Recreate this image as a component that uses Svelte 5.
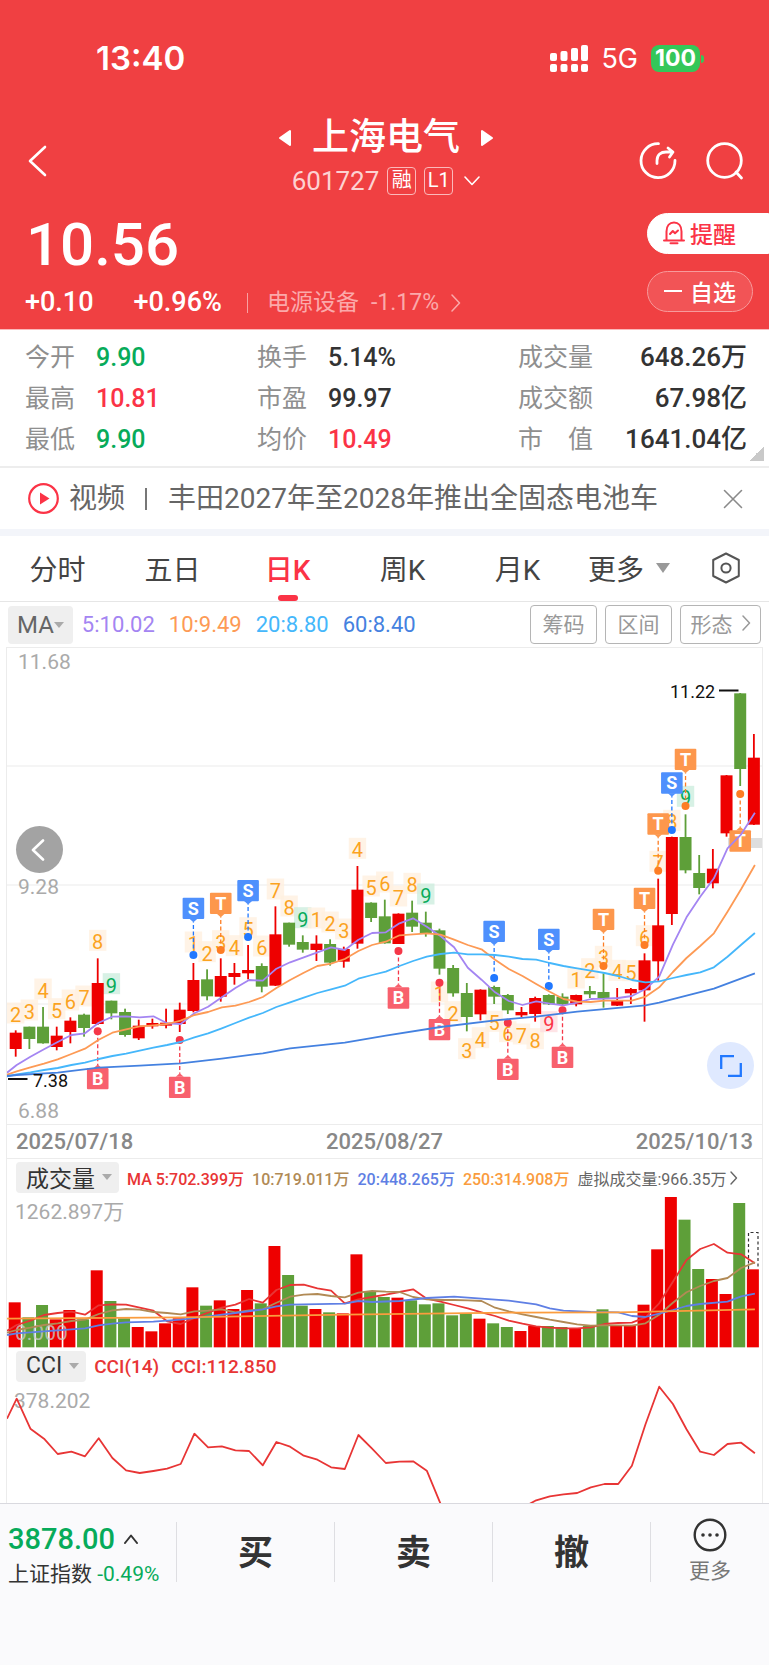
<script>
	const quotes = [
		{ label: '今开', value: '9.90', tone: 'down' },
		{ label: '换手', value: '5.14%' },
		{ label: '成交量', value: '648.26万' },
		{ label: '最高', value: '10.81', tone: 'up' },
		{ label: '市盈', value: '99.97' },
		{ label: '成交额', value: '67.98亿' },
		{ label: '最低', value: '9.90', tone: 'down' },
		{ label: '均价', value: '10.49', tone: 'up' },
		{ label: '市　值', value: '1641.04亿' }
	];

	const periods = ['分时', '五日', '日K', '周K', '月K'];
	let period = $state('日K');

	const averages = [
		{ text: '5:10.02', color: '#a485f2' },
		{ text: '10:9.49', color: '#fd9a55' },
		{ text: '20:8.80', color: '#45b7fb' },
		{ text: '60:8.40', color: '#4481e0' }
	];

	const volumeLegend = [
		{ text: 'MA 5:702.399万', color: '#e83535' },
		{ text: '10:719.011万', color: '#b18a55' },
		{ text: '20:448.265万', color: '#5f7fe4' },
		{ text: '250:314.908万', color: '#fa9c3e' }
	];

	// all chart data is in thirds of a pixel, measured down from the chart origin
	const x = (i) => 15.7 + 13.67 * i;

	// r/g, high, body top, body bottom, low
	const candles = `r 1171 1178 1227 1250|g 1160 1160 1197 1227|g 1101 1160 1210 1211|r 1160 1187 1221 1231
|r 1132 1142 1176 1210|g 1121 1124 1164 1190|r 955 1029 1152 1155|g 1082 1082 1120 1138|g 1106 1116 1185 1190
|r 1139 1157 1195 1200|r 1136 1149 1159 1166|r 1106 1148 1157 1165|r 1088 1109 1152 1176|r 969 1020 1113 1117
|g 988 1018 1069 1081|r 955 1008 1070 1085|r 969 999 1011 1034|r 915 990 1000 1018|g 970 978 1040 1057
|r 799 883 1037 1038|g 848 848 914 920|g 886 906 929 938|r 886 911 930 963|g 898 912 968 977|r 920 927 965 983
|r 678 749 911 926|g 787 788 834 846|g 779 829 910 911|r 820 821 912 912|g 782 818 860 876|g 815 848 879 890
|g 866 871 986 1004|g 975 984 1060 1070|g 1029 1059 1131 1174|r 1048 1049 1123 1141|g 1037 1041 1070 1092
|g 1062 1065 1111 1122|r 1101 1116 1126 1131|r 1070 1074 1122 1145|g 1063 1065 1093 1095|g 1060 1070 1093 1095
|r 1064 1065 1093 1099|g 1038 1053 1063 1074|g 1000 1056 1074 1103|r 1044 1081 1097 1098|r 1044 1047 1060 1092
|r 940 961 1051 1145|r 716 856 964 1022|r 590 591 822 855|g 523 591 691 700|g 645 699 744 763|r 627 686 730 745
|r 405 406 580 590|g 159 160 387 438|r 282 353 554 555`
		.split('|')
		.map((row) => {
			const [kind, ...rest] = row.trim().split(' ');
			const [high, top, bottom, low] = rest.map((v) => v / 3);
			return { kind, high, top, bottom, low };
		});

	const volumes = [
		577, 622, 585, 628, 600, 628, 481, 573, 625, 651, 664, 640, 625, 532, 587, 571, 597, 540, 580,
		408, 495, 587, 597, 607, 610, 433, 545, 561, 563, 571, 583, 580, 616, 612, 626, 640, 651, 663,
		648, 648, 651, 656, 648, 598, 648, 645, 584, 418, 261, 329, 477, 507, 552, 279, 478
	];

	// index, number, box centre
	const counts = [
		[0, 2, 1119], [1, 3, 1110], [2, 4, 1047], [3, 5, 1106], [4, 6, 1080], [5, 7, 1068],
		[6, 8, 901], [7, 9, 1031], [13, 1, 906], [14, 2, 935], [15, 3, 902], [16, 4, 917], [17, 5, 863],
		[18, 6, 918], [19, 7, 747], [20, 8, 798], [21, 9, 833], [22, 1, 834], [23, 2, 846], [24, 3, 867],
		[25, 4, 625], [26, 5, 738], [27, 6, 726], [28, 7, 768], [29, 8, 730], [30, 9, 762], [31, 1, 1056],
		[32, 2, 1115], [33, 3, 1226], [34, 4, 1193], [35, 5, 1144], [36, 6, 1175], [37, 7, 1182],
		[38, 8, 1196], [39, 9, 1145], [41, 1, 1014], [42, 2, 986], [43, 3, 949], [44, 4, 991], [45, 5, 992],
		[46, 6, 887], [47, 7, 664], [48, 8, 541], [49, 9, 469]
	];

	// index, letter, box top, dot
	const signals = [
		[6, 'B', 1284, 1174], [12, 'B', 1310, 1200], [13, 'S', 773, 945], [15, 'T', 758, 930],
		[17, 'S', 720, 891], [28, 'B', 1042, 933], [31, 'B', 1137, 1028], [35, 'S', 842, 1014],
		[36, 'B', 1256, 1148], [39, 'S', 866, 1038], [40, 'B', 1220, 1111], [43, 'T', 806, 978],
		[46, 'T', 743, 915], [47, 'T', 520, 692], [48, 'S', 397, 570], [49, 'T', 326, 498],
		[53, 'T', 571, 462]
	];
	const signalColors = {
		B: ['#f8606d', '#f53748'],
		S: ['#4e90fd', '#2178ff'],
		T: ['#fd974c', '#fd7d24']
	};

	// first value is the left edge, then one per candle
	function dense(values) {
		return values
			.map((v, i) => `${i === 0 ? 7 : (x(i - 1) + 1).toFixed(1)},${(v / 3).toFixed(1)}`)
			.join(' ');
	}

	function sparse(pairs) {
		return pairs.map(([i, v]) => `${(x(i) + 1).toFixed(1)},${(v / 3).toFixed(1)}`).join(' ');
	}

	const priceLines = [
		{
			color: '#a485f2',
			points: dense([
				1298, 1275, 1250, 1228, 1206, 1185, 1180, 1148, 1130, 1129, 1132, 1129, 1150, 1152, 1120,
				1100, 1072, 1044, 1020, 1022, 986, 967, 952, 937, 922, 930, 899, 879, 877, 850, 835, 860, 888,
				922, 983, 1019, 1057, 1083, 1095, 1084, 1091, 1096, 1088, 1077, 1076, 1074, 1068, 1047, 1010,
				914, 832, 770, 715, 625, 583, 518
			])
		},
		{
			color: '#fd9a55',
			points: dense([
				1304, 1294, 1282, 1271, 1258, 1242, 1226, 1199, 1178, 1168, 1159, 1156, 1152, 1142, 1125,
				1116, 1102, 1097, 1086, 1071, 1044, 1020, 998, 978, 971, 957, 933, 915, 905, 886, 883, 880,
				884, 899, 915, 928, 959, 987, 1008, 1032, 1055, 1077, 1085, 1086, 1082, 1082, 1082, 1070,
				1042, 996, 954, 918, 880, 815, 747, 675
			])
		},
		{
			color: '#45b7fb',
			points: dense([
				1309, 1303, 1297, 1290, 1284, 1275, 1268, 1257, 1248, 1241, 1232, 1223, 1215, 1206, 1192,
				1180, 1165, 1149, 1133, 1119, 1101, 1087, 1073, 1059, 1048, 1037, 1016, 1005, 995, 978, 963,
				950, 942, 938, 943, 943, 945, 950, 957, 959, 969, 978, 985, 992, 999, 1008, 1020, 1027, 1024,
				1014, 1005, 997, 982, 950, 914, 879
			])
		},
		{
			color: '#4481e0',
			points: sparse([
				[-0.7, 1308], [0, 1305], [3, 1298], [6, 1283], [9, 1277], [12, 1270], [15, 1256], [18, 1240],
				[20, 1225], [24, 1208], [27, 1187], [31, 1161], [35, 1141], [38, 1130], [41, 1115],
				[46, 1096], [47, 1088], [49, 1067], [51, 1046], [54, 1000]
			])
		}
	];

	const volumeLines = [
		{
			color: '#e83535',
			points: dense([
				662, 645, 632, 615, 609, 605, 614, 586, 583, 584, 593, 602, 634, 642, 624, 608, 593, 584, 567,
				578, 540, 525, 524, 535, 542, 580, 568, 561, 554, 546, 538, 566, 575, 585, 595, 607, 618, 632,
				641, 649, 653, 655, 655, 652, 642, 639, 638, 622, 580, 515, 450, 417, 402, 428, 433, 460
			])
		},
		{
			color: '#b18a55',
			points: dense([
				668, 660, 653, 645, 640, 633, 629, 612, 601, 597, 599, 606, 609, 613, 604, 602, 598, 607, 601,
				598, 578, 560, 554, 552, 558, 562, 548, 543, 545, 546, 561, 568, 570, 570, 571, 573, 593, 604,
				613, 621, 629, 636, 643, 647, 646, 646, 647, 640, 614, 578, 547, 528, 513, 504, 474, 457
			])
		},
		{
			color: '#5f7fe4',
			points: sparse([
				[-0.7, 675], [0, 670], [3, 661], [5, 655], [6, 646], [7, 641], [8, 637], [10, 635], [12, 629],
				[14, 619], [16, 609], [18, 598], [19, 589], [20, 584], [24, 581], [25, 573], [26, 576],
				[28, 573], [30, 564], [32, 560], [34, 566], [36, 572], [38, 583], [39, 595], [40, 602],
				[42, 606], [44, 607], [45, 618], [46, 621], [47, 611], [48, 600], [49, 588], [50, 582],
				[52, 575], [53, 559], [54, 551]
			])
		},
		{
			color: '#fa9c3e',
			points: sparse([[-0.7, 626], [12, 622], [24, 614], [36, 608], [44, 607], [54, 598]])
		}
	];

	const cci = dense([
		923, 863, 953, 983, 1029, 1022, 1036, 982, 1041, 1078, 1086, 1080, 1073, 1059, 968, 1009, 1006,
		1018, 1020, 1063, 993, 1007, 1034, 1046, 1069, 1074, 972, 1013, 1056, 1052, 1051, 1079, 1178,
		1260, 1280, 1280, 1270, 1240, 1190, 1168, 1156, 1150, 1146, 1129, 1119, 1119, 1064, 940, 827,
		879, 955, 1022, 1032, 999, 995, 1027
	]);
</script>

<div class="page">
	<header>
		<div class="status">
			<span class="clock">13:40</span>
			<div class="status-right">
				<svg width="38" height="28" viewBox="0 0 38 28" fill="#fff">
					<rect x="0" y="9" width="7" height="8" rx="2" />
					<rect x="10.5" y="7" width="7" height="10" rx="2" />
					<rect x="21" y="4" width="7" height="13" rx="2" />
					<rect x="31" y="1" width="7" height="16" rx="2" />
					<rect x="0" y="20" width="7" height="8" rx="2" />
					<rect x="10.5" y="20" width="7" height="8" rx="2" />
					<rect x="21" y="20" width="7" height="8" rx="2" />
					<rect x="31" y="20" width="7" height="8" rx="2" />
				</svg>
				<span class="network">5G</span>
				<span class="battery">100</span>
			</div>
		</div>

		<nav class="title-bar">
			<button class="icon-btn" aria-label="返回">
				<svg width="20" height="32" viewBox="0 0 20 32">
					<path d="M17 2 2 16l15 14" stroke-width="2.6" />
				</svg>
			</button>
			<div class="stock">
				<div class="stock-name">
					<button class="icon-btn" aria-label="上一只">
						<svg width="14" height="18" viewBox="0 0 14 18">
							<path d="M12 2v14L2 9z" fill="#fff" stroke-width="2" />
						</svg>
					</button>
					<h1>上海电气</h1>
					<button class="icon-btn" aria-label="下一只">
						<svg width="14" height="18" viewBox="0 0 14 18">
							<path d="M2 2v14l10-7z" fill="#fff" stroke-width="2" />
						</svg>
					</button>
				</div>
				<div class="stock-code">
					<span>601727</span>
					<span class="tag">融</span>
					<span class="tag">L1</span>
					<svg width="16" height="10" viewBox="0 0 16 10">
						<path d="M1 1l7 7.500L15 1" stroke-width="1.6" />
					</svg>
				</div>
			</div>
			<div class="actions">
				<button class="icon-btn" aria-label="分享">
					<svg width="38" height="38" viewBox="0 0 38 38" stroke-width="2.8">
						<path d="M19.500 1.700A17 17 0 1 0 36 18.500" />
						<path d="M18 21.500v-3c0-6 4-8.500 9-8.500h6.500M29 6l5 4-3.500 5" />
					</svg>
				</button>
				<button class="icon-btn" aria-label="搜索">
					<svg width="38" height="38" viewBox="0 0 38 38" stroke-width="2.8">
						<circle cx="18.500" cy="18.500" r="16.800" />
						<path d="M30 30l5.500 6" />
					</svg>
				</button>
			</div>
		</nav>

		<div class="summary">
			<div>
				<div class="price">10.56</div>
				<div class="change">
					<span>+0.10</span>
					<span class="percent">+0.96%</span>
					<a class="sector" href="#sector">
						<span>电源设备</span>
						<span>-1.17%</span>
						<svg width="10" height="18" viewBox="0 0 10 18">
							<path d="M1 1l7.500 8L1 17" stroke-width="1.500" />
						</svg>
					</a>
				</div>
			</div>
			<div class="pills">
				<button class="pill remind">
					<svg width="22" height="24" viewBox="0 0 22 24" stroke-width="2">
						<path d="M1 19.500h2.500v-9C3.500 5 6.500 1.500 11 1.500s7.500 3.500 7.500 9v9H21M3.500 19.500h15M7.500 22.300h7" />
						<path d="M7 13l2.800-3 2.200 2.300L15 9.500" />
					</svg>
					提醒
				</button>
				<button class="pill"><span class="minus"></span>自选</button>
			</div>
		</div>
	</header>

	<dl class="quotes">
		{#each quotes as quote (quote.label)}
			<div class="quote">
				<dt>{quote.label}</dt>
				<dd class={quote.tone}>{quote.value}</dd>
			</div>
		{/each}
	</dl>

	<div class="news">
		<svg width="31" height="31" viewBox="0 0 31 31">
			<circle cx="15.500" cy="15.500" r="14.300" fill="none" stroke="#fb3346" stroke-width="2.200" />
			<path d="M12 9.500v12l9.500-6z" fill="#fb3346" />
		</svg>
		<span>视频</span>
		<i></i>
		<a href="#news">丰田2027年至2028年推出全固态电池车</a>
		<button class="icon-btn" aria-label="关闭">
			<svg width="20" height="20" viewBox="0 0 20 20">
				<path d="M1.500 1.500l17 17M18.500 1.500l-17 17" stroke="#8a8a8a" stroke-width="1.600" />
			</svg>
		</button>
	</div>

	<div class="periods">
		{#each periods as name (name)}
			<button class:active={period === name} onclick={() => (period = name)}>{name}</button>
		{/each}
		<button class="more">更多 <span class="caret big"></span></button>
		<button aria-label="设置">
			<svg width="30" height="32" viewBox="0 0 30 32" fill="none" stroke="#555" stroke-width="2" stroke-linejoin="round">
				<path d="M15 1.500l12.800 6.500v16L15 30.500 2.200 24V8z" />
				<circle cx="15" cy="16" r="4.600" />
			</svg>
		</button>
	</div>

	<div class="toolbar">
		<button class="chip ma">MA<span class="caret"></span></button>
		{#each averages as item (item.text)}
			<span style:color={item.color}>{item.text}</span>
		{/each}
		<div class="tools">
			<button>筹码</button>
			<button>区间</button>
			<button class="wide">
				形态
				<svg width="9" height="16" viewBox="0 0 9 16">
					<path d="M1 1l6.500 7L1 15" stroke="#999" stroke-width="1.500" />
				</svg>
			</button>
		</div>
	</div>

	<main class="charts">
		<section class="kline">
			<svg class="plot" viewBox="7 8 755 476" role="img" aria-label="日K">
				{#each [126, 245, 364] as y}
					<path d="M7 {y}h755" stroke="#f2f2f2" stroke-width="1.500" />
				{/each}
				<g class="axis">
					<text x="18" y="29">11.68</text>
					<text x="18" y="254">9.28</text>
					<text x="18" y="478">6.88</text>
				</g>
				<rect x="728" y="198" width="34" height="10" fill="#dedede" />

				{#each counts as [i, n, y]}
					{@const tone = n === 9 ? (i === 39 ? 'nine-up' : 'nine') : ''}
					<g class="count {tone}">
						<rect x={x(i) - 8.7} y={y / 3 - 10.5} width="17.400" height="21" />
						<text x={x(i)} y={y / 3 + 9}>{n}</text>
					</g>
				{/each}

				{#each candles as c, i}
					<g class={c.kind}>
						<rect x={x(i) - 0.9} y={c.high} width="1.800" height={c.low - c.high} />
						<rect x={x(i) - 6} y={c.top} width="12" height={c.bottom - c.top} />
					</g>
				{/each}

				{#each signals as [i, letter, top, dot]}
					{@const [fill, dark] = signalColors[letter]}
					{@const below = top > dot}
					{@const y = top / 3}
					<path
						d="M{x(i)} {dot / 3}V{below ? y - 3 : y + 24}"
						stroke={dark}
						stroke-width="1.300"
						stroke-dasharray="4 2.500"
					/>
					<circle cx={x(i)} cy={dot / 3} r="4" fill={dark} />
					<rect x={x(i) - 10.8} {y} width="21.600" height="21.300" rx="1" {fill} />
					{#if below}
						<path d="M{x(i) - 4} {y}l4-3.500 4 3.500z" {fill} />
					{:else}
						<path d="M{x(i) - 4} {y + 21}l4 3.500 4-3.500z" {fill} />
					{/if}
					<text class="signal" x={x(i)} y={y + 17}>{letter}</text>
				{/each}

				{#each priceLines as line}
					<polyline points={line.points} stroke={line.color} />
				{/each}

				<g class="extreme">
					<text x="670" y="58">11.22</text>
					<path d="M719 50.500h19.500" />
					<text x="33" y="447">7.38</text>
					<path d="M8 439h19.500" />
				</g>
			</svg>
			<button class="round prev" aria-label="向前">
				<svg width="14" height="22" viewBox="0 0 14 22">
					<path d="M12 1.500L2 11l10 9.500" stroke="#fff" stroke-width="2.600" />
				</svg>
			</button>
			<button class="round expand" aria-label="全屏">
				<svg width="22" height="22" viewBox="0 0 22 22">
					<path d="M1.200 14V1.200H14M20.800 8v12.800H8" stroke="#2178ff" stroke-width="2.300" />
				</svg>
			</button>
		</section>

		<div class="dates">
			<span>2025/07/18</span>
			<span>2025/08/27</span>
			<span>2025/10/13</span>
		</div>

		<section>
			<div class="legend">
				<button class="chip">成交量<span class="caret"></span></button>
				{#each volumeLegend as item (item.text)}
					<span style:color={item.color}>{item.text}</span>
				{/each}
				<a href="#virtual">
					虚拟成交量:966.35万
					<svg width="8" height="14" viewBox="0 0 8 14">
						<path d="M1 1l5.500 6L1 13" stroke="#666" stroke-width="1.400" />
					</svg>
				</a>
			</div>
			<svg class="plot" viewBox="7 86 755 152" role="img" aria-label="成交量">
				<text class="axis" x="15" y="109">1262.897万</text>
				{#each volumes as top, i}
					<rect class={candles[i].kind} x={x(i) - 7} y={top / 3} width="12" height={(712 - top) / 3} />
				{/each}
				<path
					d="M748.500 159v-36.500h9.500V159"
					fill="none"
					stroke="#333"
					stroke-width="1.200"
					stroke-dasharray="3 2.500"
				/>
				<text class="axis zero" x="15" y="230">0.000</text>
				{#each volumeLines as line}
					<polyline points={line.points} stroke={line.color} />
				{/each}
			</svg>
		</section>

		<section>
			<div class="legend cci">
				<button class="chip">CCI<span class="caret"></span></button>
				<span>CCI(14)</span>
				<span>CCI:112.850</span>
			</div>
			<svg class="plot" viewBox="7 274 755 118" role="img" aria-label="CCI">
				<text class="axis" x="14" y="297">378.202</text>
				<polyline points={cci} stroke="#e83535" />
			</svg>
		</section>
	</main>

	<footer>
		<button class="index">
			<span class="index-value">
				3878.00
				<svg width="14" height="10" viewBox="0 0 14 10">
					<path d="M1 9l6-7.500L13 9" stroke="#333" stroke-width="2" />
				</svg>
			</span>
			<span class="index-name">上证指数 <b>-0.49%</b></span>
		</button>
		<button class="trade">买</button>
		<button class="trade">卖</button>
		<button class="trade">撤</button>
		<button class="more-actions">
			<svg width="34" height="34" viewBox="0 0 34 34">
				<circle cx="17" cy="17" r="15.300" stroke="#333" stroke-width="2.400" />
				<g fill="#333">
					<circle cx="10" cy="17" r="1.800" />
					<circle cx="17" cy="17" r="1.800" />
					<circle cx="24" cy="17" r="1.800" />
				</g>
			</svg>
			更多
		</button>
	</footer>
</div>

<style>
	:global(body) {
		background: #fafafc;
	}
	.page {
		font-family: Roboto, 'Noto Sans CJK SC', sans-serif;
		color: #333;
		background: #fff;
	}
	button {
		padding: 0;
		border: 0;
		background: none;
		font: inherit;
		color: inherit;
		cursor: pointer;
	}
	a {
		color: inherit;
		text-decoration: none;
	}
	svg {
		display: block;
		flex: none;
	}
	.icon-btn svg,
	.stock-code svg,
	.sector svg,
	.tools svg,
	.legend svg,
	.round svg,
	.remind svg,
	footer svg {
		fill: none;
		stroke-linecap: round;
		stroke-linejoin: round;
	}

	/* header */
	header {
		padding-bottom: 5px;
		background: #f04042;
		color: #fff;
		border-bottom: 1px solid #fbb9ba;
	}
	header svg {
		stroke: #fff;
	}
	.status {
		display: flex;
		justify-content: space-between;
		align-items: center;
		height: 116px;
		padding: 0 69px 0 96px;
		box-sizing: border-box;
		font-family: Inter, sans-serif;
	}
	.status svg {
		stroke: none;
	}
	.clock {
		font-size: 33px;
		font-weight: 600;
	}
	.status-right {
		display: flex;
		align-items: center;
		gap: 13px;
	}
	.network {
		font-size: 27px;
	}
	.battery {
		position: relative;
		width: 49px;
		height: 27px;
		line-height: 27px;
		border-radius: 8px;
		background: #34c759;
		text-align: center;
		font-size: 23px;
		font-weight: 700;
	}
	.battery::after {
		content: '';
		position: absolute;
		right: -4px;
		top: 10px;
		width: 3px;
		height: 8px;
		border-radius: 0 3px 3px 0;
		background: #34c759;
	}
	.title-bar {
		display: grid;
		grid-template-columns: 1fr auto 1fr;
		align-items: center;
		height: 88px;
		padding: 0 25px 0 28px;
	}
	.title-bar > .icon-btn {
		justify-self: start;
	}
	.stock {
		padding-bottom: 4px;
	}
	.stock-name,
	.stock-code,
	.actions {
		display: flex;
		align-items: center;
	}
	.stock-name {
		justify-content: center;
		gap: 20px;
	}
	h1 {
		margin: 0;
		font-size: 37px;
		line-height: 44px;
		font-weight: 500;
	}
	.stock-code {
		justify-content: center;
		gap: 8px;
		font-size: 26px;
		line-height: 42px;
		color: #fdd2d2;
	}
	.tag {
		width: 27px;
		height: 26px;
		line-height: 25px;
		border: 1px solid #fbb9ba;
		border-radius: 4px;
		text-align: center;
		font-size: 20px;
		color: #fff;
	}
	.stock-code svg {
		margin-left: 3px;
	}
	.actions {
		justify-content: flex-end;
		gap: 29px;
	}
	.summary {
		display: flex;
		justify-content: space-between;
		padding-left: 25px;
	}
	.price {
		margin-top: 5px;
		padding-left: 1px;
		font-size: 60px;
		line-height: 72px;
		font-weight: 500;
	}
	.change {
		display: flex;
		align-items: center;
		font-size: 27px;
		line-height: 43px;
		font-weight: 500;
	}
	.percent {
		margin-left: 40px;
	}
	.sector {
		display: flex;
		align-items: center;
		gap: 12px;
		margin-left: 25px;
		font-size: 23px;
		line-height: 28px;
		font-weight: 400;
		color: #fba9aa;
	}
	.sector::before {
		content: '';
		width: 1px;
		height: 20px;
		margin-right: 7px;
		background: #f9a0a1;
	}
	.sector svg {
		stroke: #fba9aa;
	}
	.pills {
		display: grid;
		gap: 17px;
		align-content: start;
		margin-top: 9px;
	}
	.pill {
		display: flex;
		align-items: center;
		justify-content: center;
		gap: 8px;
		width: 106px;
		height: 41px;
		padding-bottom: 2px;
		border: 1px solid #f79a9b;
		border-radius: 21px;
		background: #f25456;
		font-size: 23px;
		font-weight: 500;
	}
	.remind {
		justify-content: flex-start;
		width: 122px;
		gap: 5px;
		padding-left: 15px;
		border-color: #fff;
		border-radius: 21px 0 0 21px;
		background: #fff;
		color: #fb3346;
	}
	.remind svg {
		stroke: #fb3346;
	}
	.minus {
		width: 18px;
		height: 2px;
		background: #fff;
	}

	/* quotes */
	.quotes {
		position: relative;
		display: grid;
		grid-template-columns: 232fr 261fr 229fr;
		margin: 0;
		padding: 7px 22px 6px 25px;
		border-bottom: 2px solid #ededed;
	}
	.quotes::after {
		content: '';
		position: absolute;
		right: 5px;
		bottom: 5px;
		width: 15px;
		height: 15px;
		background: linear-gradient(135deg, transparent 50%, #c9c9c9 50%);
	}
	.quote {
		display: flex;
		align-items: center;
		line-height: 41px;
		font-size: 25px;
	}
	dt {
		min-width: 71px;
		color: #8f8f8f;
	}
	dd {
		margin: 0;
		font-weight: 500;
	}
	.quote:nth-child(3n) dd {
		margin-left: auto;
		font-size: 26px;
	}
	.up {
		color: #fb3346;
	}
	.down {
		color: #07ab5a;
	}

	/* news */
	.news {
		display: flex;
		align-items: center;
		height: 61px;
		padding: 0 26px 0 28px;
		border-bottom: 7px solid #f3f5fa;
		font-size: 28px;
		line-height: 40px;
		color: #666;
	}
	.news span {
		margin-left: 10px;
	}
	.news i {
		width: 2px;
		height: 22px;
		margin: 0 21px 0 20px;
		background: #777;
	}
	.news .icon-btn {
		margin-left: auto;
	}

	/* tabs */
	.periods {
		display: grid;
		grid-template-columns: repeat(5, 115fr) 108fr 86fr;
		height: 65px;
		border-bottom: 1px solid #e6e6e6;
	}
	.periods button {
		position: relative;
		display: flex;
		align-items: center;
		justify-content: center;
		padding-bottom: 2px;
		font-size: 28px;
		color: #444;
	}
	.periods .active {
		color: #fb3346;
		font-weight: 500;
	}
	.periods .active::after {
		content: '';
		position: absolute;
		bottom: 0;
		width: 20px;
		height: 6px;
		border-radius: 3px;
		background: #fb3346;
	}
	.periods .more {
		gap: 12px;
	}
	.caret {
		border: 5px solid transparent;
		border-top: 6px solid #aaa;
		border-bottom: 0;
	}
	.big {
		border-width: 10px 7px 0;
		border-top-color: #999;
	}

	/* toolbar */
	.chip {
		display: flex;
		align-items: center;
		gap: 7px;
		height: 31px;
		padding: 0 7px 2px 10px;
		border-radius: 4px;
		background: #efefef;
		font-size: 23px;
		font-weight: 400;
		color: #333;
	}
	.toolbar {
		display: flex;
		align-items: center;
		gap: 14px;
		height: 45px;
		padding: 0 8px;
		font-size: 22px;
	}
	.chip.ma {
		height: 38px;
		gap: 0;
		margin-right: -5px;
		padding: 0 9px;
		font-size: 24px;
		color: #666;
	}
	.tools {
		display: flex;
		gap: 8px;
		margin-left: auto;
	}
	.tools button {
		display: flex;
		align-items: center;
		justify-content: center;
		gap: 9px;
		width: 67px;
		height: 39px;
		padding-bottom: 3px;
		border: 1px solid #b5b5b5;
		border-radius: 4px;
		font-size: 21px;
		color: #999;
	}
	.tools .wide {
		width: 81px;
	}

	/* charts */
	.charts {
		margin: 0 6px;
		border: solid #ececec;
		border-width: 1px 1px 0;
	}
	.plot {
		width: 100%;
	}
	.axis {
		font-size: 21px;
		fill: #aaa;
	}
	.zero {
		fill: #c9c9c9;
		fill-opacity: 0.8;
	}
	.r {
		fill: #ee0000;
	}
	.g {
		fill: #5e9f39;
	}
	polyline {
		fill: none;
		stroke-width: 1.8;
		stroke-linejoin: round;
	}
	.count rect {
		fill: #fff0e0;
		fill-opacity: 0.8;
	}
	.count text {
		fill: #fba31f;
		font-size: 20px;
		text-anchor: middle;
	}
	.count.nine rect {
		fill: #cdeedf;
	}
	.count.nine text {
		fill: #07ab5a;
	}
	.count.nine-up rect {
		fill: #fedde0;
	}
	.count.nine-up text {
		fill: #fb3346;
	}
	.signal {
		fill: #fff;
		font-size: 18px;
		font-weight: 700;
		text-anchor: middle;
	}
	.extreme {
		font-size: 18px;
		fill: #111;
		stroke-width: 2;
	}
	.extreme path {
		stroke: #111;
	}
	.kline {
		position: relative;
		border-bottom: 1px solid #ececec;
	}
	.round {
		position: absolute;
		display: grid;
		place-items: center;
		width: 47px;
		height: 47px;
		border-radius: 50%;
	}
	.prev {
		left: 9px;
		top: 178px;
		padding-right: 3px;
		background: #a3a3a3;
	}
	.expand {
		right: 8px;
		bottom: 35px;
		background: #dfe9ff;
	}
	.expand svg {
		stroke-linecap: butt;
		stroke-linejoin: miter;
	}
	.dates {
		display: flex;
		justify-content: space-between;
		padding: 0 9px;
		border-bottom: 1px solid #ececec;
		font-size: 22px;
		line-height: 33px;
		font-weight: 500;
		color: #888;
	}
	.legend {
		display: flex;
		align-items: center;
		gap: 8px;
		height: 37px;
		padding-left: 9px;
		font-size: 16px;
		font-weight: 500;
		white-space: nowrap;
	}
	.legend a {
		display: flex;
		align-items: center;
		gap: 4px;
		font-weight: 400;
		color: #666;
	}
	.cci {
		font-size: 19px;
		color: #e83535;
	}
	.cci span + span {
		margin-left: 4px;
	}

	/* bottom bar */
	footer {
		display: grid;
		grid-template-columns: 177fr repeat(3, 158fr) 118fr;
		padding: 18px 0 84px;
		border-top: 1px solid #d9d9df;
		background: #fafafc;
	}
	footer button {
		display: flex;
		flex-direction: column;
		justify-content: center;
		height: 60px;
		border-right: 1px solid #dedee2;
	}
	.index {
		align-items: flex-start;
		gap: 2px;
		padding: 8px 0 0 8px;
		white-space: nowrap;
	}
	.index-value {
		display: flex;
		align-items: center;
		gap: 9px;
		font-size: 29px;
		line-height: 34px;
		font-weight: 500;
		color: #07ab5a;
	}
	.index-name {
		font-size: 21px;
		line-height: 32px;
	}
	.index-name b {
		font-weight: 400;
		color: #07ab5a;
	}
	footer .trade {
		align-items: center;
		padding-bottom: 5px;
		font-size: 35px;
		font-weight: 700;
	}
	footer .more-actions {
		align-items: center;
		gap: 4px;
		border: 0;
		font-size: 21px;
		line-height: 30px;
		color: #777;
	}
</style>
